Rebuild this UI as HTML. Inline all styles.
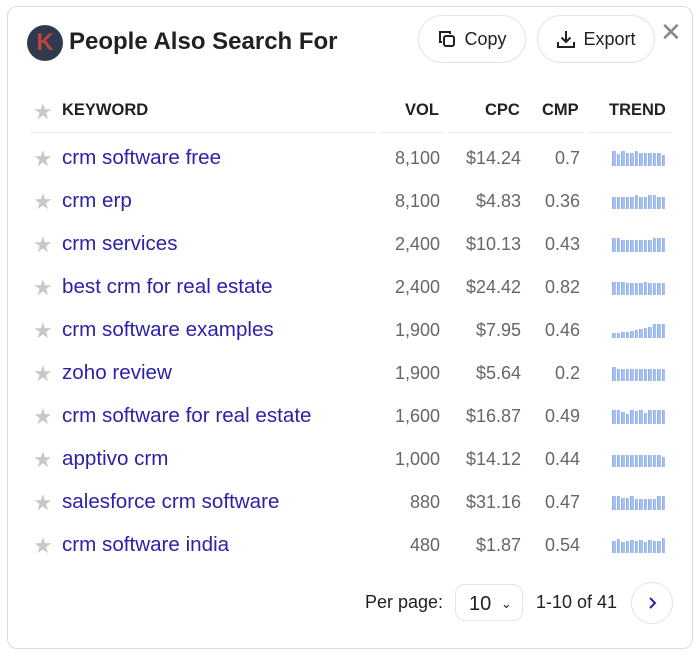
<!DOCTYPE html>
<html><head><style>
*{margin:0;padding:0;box-sizing:border-box}
body{width:700px;height:656px;background:#fff;font-family:"Liberation Sans",Arial,sans-serif;position:relative;overflow:hidden}
.card{position:absolute;left:7px;top:6px;width:686px;height:643px;border:1px solid #dcdcdc;border-radius:10px}
.a{position:absolute}
.logo{left:27px;top:25px;width:36px;height:36px;border-radius:50%;background:#2f3a4f;color:#b8453f;font-size:24px;font-weight:bold;text-align:center;line-height:36px}
.title{left:69px;top:28px;font-size:24px;font-weight:bold;color:#202124}
.btn{top:15px;height:48px;border:1px solid #dfe3ee;border-radius:24px;font-size:18px;color:#202124;display:flex;align-items:center;justify-content:center;gap:7px}
.star{color:#c8c8c8;font-size:22px;left:33px}
.kw{left:62px;font-size:20.6px;color:#2b22a8}
.n{font-size:18px;color:#666;text-align:right}
.h{font-size:16.5px;font-weight:bold;color:#202124}
.line{top:132px;height:1px;background:#ececec}
.tr{left:612px;width:54px;height:16px;display:flex;align-items:flex-end;gap:1px}
.tr i{display:block;width:3.5px;background:#a7c0f0;border-left:1px solid #8fb0ee}
</style></head><body>
<div class="card"></div>
<div class="a logo">K</div>
<div class="a title">People Also Search For</div>
<div class="a btn" style="left:418px;width:108px"><svg width="20" height="20" viewBox="0 0 20 20" fill="none" stroke="#202124" stroke-width="2"><path d="M5 13H3V3h10v2"/><rect x="7" y="7" width="10" height="10" rx="2"/></svg>Copy</div>
<div class="a btn" style="left:537px;width:118px"><svg width="20" height="20" viewBox="0 0 20 20" fill="none" stroke="#202124" stroke-width="2"><path d="M10 2v11M5.5 8.5L10 13l4.5-4.5M2 13v5h16v-5"/></svg>Export</div>
<div class="a" style="left:660px;top:17px;font-size:26px;color:#888">✕</div>
<div class="a star" style="top:99px">★</div>
<div class="a h" style="left:62px;top:101px">KEYWORD</div>
<div class="a h" style="left:405px;top:101px">VOL</div>
<div class="a h" style="left:485px;top:101px">CPC</div>
<div class="a h" style="left:542px;top:101px">CMP</div>
<div class="a h" style="left:609px;top:101px">TREND</div>
<div class="a line" style="left:30px;width:24px"></div>
<div class="a line" style="left:57px;width:318px"></div>
<div class="a line" style="left:380px;width:64px"></div>
<div class="a line" style="left:448px;width:78px"></div>
<div class="a line" style="left:529px;width:55px"></div>
<div class="a line" style="left:588px;width:82px"></div>
<div id="rows"></div>
<div class="a" style="left:365px;top:592px;font-size:18px;color:#202124">Per page:</div>
<div class="a" style="left:455px;top:584px;width:68px;height:37px;border:1px solid #e3e3e3;border-radius:10px;font-size:20px;color:#202124;padding:8px 0 0 13px">10 <span style="font-size:13px;position:relative;top:-2px;left:4px">⌄</span></div>
<div class="a" style="left:536px;top:592px;font-size:18px;color:#202124">1-10 of 41</div>
<div class="a" style="left:631px;top:582px;width:42px;height:42px;border:1px solid #e3e3e3;border-radius:50%;display:flex;align-items:center;justify-content:center"><svg width="12" height="14" viewBox="0 0 12 14"><path d="M4 2l5 5-5 5" fill="none" stroke="#2b22a8" stroke-width="2"/></svg></div>
<script>
var d=[["crm software free","8,100","$14.24","0.7"],["crm erp","8,100","$4.83","0.36"],["crm services","2,400","$10.13","0.43"],["best crm for real estate","2,400","$24.42","0.82"],["crm software examples","1,900","$7.95","0.46"],["zoho review","1,900","$5.64","0.2"],["crm software for real estate","1,600","$16.87","0.49"],["apptivo crm","1,000","$14.12","0.44"],["salesforce crm software","880","$31.16","0.47"],["crm software india","480","$1.87","0.54"]];
var pats=[[15,12,15,13,13,15,13,13,13,13,13,11],[12,12,12,12,12,14,12,12,14,14,12,12],[14,14,12,12,12,12,12,12,12,14,14,14],[13,13,13,12,12,12,12,13,12,12,12,12],[5,5,6,6,7,8,9,10,11,14,14,14],[14,12,12,12,12,12,12,12,12,12,12,12],[14,14,12,10,14,13,14,11,14,14,14,14],[12,12,12,12,12,12,12,12,12,12,12,10],[14,14,12,12,14,11,11,11,11,11,14,14],[12,14,11,12,13,12,13,11,13,12,12,15]];
var h="";
for(var i=0;i<10;i++){var y=146+i*43;var r=d[i];
h+='<div class="a star" style="top:'+(y)+'px">★</div><div class="a kw" style="top:'+(y)+'px">'+r[0]+'</div>';
h+='<div class="a n" style="top:'+(y+2)+'px;right:260px">'+r[1]+'</div>';
h+='<div class="a n" style="top:'+(y+2)+'px;right:179px">'+r[2]+'</div>';
h+='<div class="a n" style="top:'+(y+2)+'px;right:120px">'+r[3]+'</div>';
h+='<div class="a tr" style="top:'+(y+4)+'px">';for(var j=0;j<12;j++)h+='<i style="height:'+pats[i][j]+'px"></i>';h+='</div>';}
document.getElementById("rows").innerHTML=h;
</script>
</body></html>
